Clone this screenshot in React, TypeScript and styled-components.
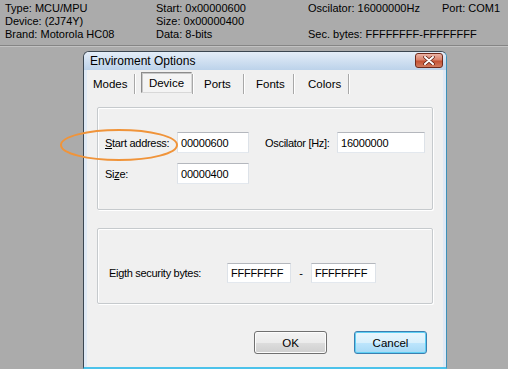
import React from "react";
import styled, { createGlobalStyle } from "styled-components";

const Global = createGlobalStyle`
  html, body { margin: 0; padding: 0; }
  body {
    background: #ababab;
    font-family: "Liberation Sans", Arial, sans-serif;
    font-size: 11px;
    color: #000;
    width: 508px;
    height: 369px;
    overflow: hidden;
  }
`;

const Page = styled.div`
  position: relative;
  width: 508px;
  height: 369px;
  overflow: hidden;
`;

const InfoBar = styled.div`
  display: grid;
  grid-template-columns: 151px 152px 134px 1fr;
  grid-auto-rows: 13px;
  padding: 2px 0 0 5px;
  height: 43px;
  line-height: 13px;
  border-bottom: 1px solid #858585;
  box-shadow: 0 1px 0 #c2c2c2;
  white-space: nowrap;
`;

const Dialog = styled.div`
  margin: 5px 0 0 83px;
  width: 364px;
  height: 318px;
  box-sizing: border-box;
  border: 1px solid #3b4650;
  border-right-color: #3d90b8;
  border-bottom: 2px solid #4cc2ea;
  border-radius: 6px 6px 0 0;
  background: #dfe9f5;
  padding: 0 3px;
  display: flex;
  flex-direction: column;
`;

const TitleBar = styled.div`
  height: 17px;
  margin: 0 -3px;
  padding: 1px 3px 0 6px;
  border-radius: 5px 5px 0 0;
  background: linear-gradient(#e4edf8, #bcd2ea);
  display: flex;
  justify-content: space-between;
  align-items: flex-start;
`;

const TitleText = styled.span`
  font-size: 12px;
  line-height: 16px;
  color: #000;
`;

const CloseButton = styled.div`
  width: 28px;
  height: 15px;
  box-sizing: border-box;
  border: 1px solid #6e2a1c;
  border-radius: 3px;
  background: linear-gradient(#eab2a4 0%, #d9826c 45%, #c45132 55%, #d27c60 100%);
  display: flex;
  align-items: center;
  justify-content: center;
`;

const Client = styled.div`
  flex: 1;
  background: #f0f0f0;
  display: flex;
  flex-direction: column;
`;

const TabStrip = styled.div`
  display: flex;
  align-items: center;
  padding-top: 3px;
  height: 21px;
`;

const Tab = styled.div<{ $w: number; $pad: number }>`
  width: ${(p) => p.$w}px;
  height: 20px;
  box-sizing: border-box;
  padding-left: ${(p) => p.$pad}px;
  line-height: 18px;
  font-size: 11.5px;
  border-right: 1px solid #a8a8a8;
  box-shadow: 1px 0 0 #ffffff;
  display: flex;
  align-items: center;
  margin-right: 1px;
`;

const ActiveTab = styled.div`
  width: 51px;
  height: 21px;
  box-sizing: border-box;
  margin: -2px 0 0 5px;
  border: 1px solid #8c8c8c;
  border-right-color: #d8d8d8;
  border-bottom-color: #d8d8d8;
  box-shadow: inset 1px 1px 0 #c8c8c8;
  background: #f4f4f4;
  display: flex;
  align-items: center;
  justify-content: center;
  font-size: 11.5px;
`;

const GroupBox = styled.div<{ $top: number; $h: number }>`
  margin: ${(p) => p.$top}px 10px 0 10px;
  height: ${(p) => p.$h}px;
  box-sizing: border-box;
  border: 1px solid #c6cacd;
  border-radius: 2px;
  box-shadow: inset 1px 1px 0 #ffffff, 1px 1px 0 #ffffff;
`;

const DeviceGrid = styled.div`
  display: grid;
  grid-template-columns: 72px 72px 16px 72px 88px;
  grid-auto-rows: 21px;
  row-gap: 10px;
  padding: 24px 0 0 7px;
  align-items: center;
`;

const SecurityGrid = styled.div`
  display: grid;
  grid-template-columns: 118px 64px 20px 65px;
  grid-auto-rows: 20px;
  padding: 34px 0 0 11px;
  align-items: center;
`;

const Label = styled.span`
  white-space: nowrap;
  letter-spacing: -0.3px;
`;

const Dash = styled.span`
  text-align: center;
`;

const Field = styled.div`
  height: 100%;
  box-sizing: border-box;
  background: #ffffff;
  border: 1px solid;
  border-color: #b4b7bd #dde2e8 #e3e8ee #dde2e8;
  padding: 0 3px;
  display: flex;
  align-items: center;
  letter-spacing: -0.2px;
`;

const ButtonRow = styled.div`
  display: flex;
  justify-content: flex-end;
  gap: 27px;
  padding: 27px 16px 0 0;
`;

const Button = styled.div<{ $default?: boolean }>`
  width: 73px;
  height: 23px;
  box-sizing: border-box;
  border-radius: 3px;
  border: 1px solid ${(p) => (p.$default ? "#3c7fb1" : "#707070")};
  background: ${(p) =>
    p.$default
      ? "linear-gradient(#eaf6fd 0%, #d9f0fc 50%, #bee6fd 50%, #a7d9f5 100%)"
      : "linear-gradient(#f3f3f3 0%, #ebebeb 50%, #dddddd 50%, #cfcfcf 100%)"};
  box-shadow: ${(p) =>
    p.$default ? "inset 0 0 0 1px #5fd0f4" : "inset 0 0 0 1px #fcfcfc"};
  display: flex;
  align-items: center;
  justify-content: center;
  font-size: 11.5px;
`;

const Highlight = styled.svg`
  position: absolute;
  left: 59px;
  top: 128px;
  pointer-events: none;
`;

export default function App() {
  return (
    <Page>
      <Global />
      <InfoBar>
        <span>Type: MCU/MPU</span>
        <span>Start: 0x00000600</span>
        <span>Oscilator: 16000000Hz</span>
        <span>Port: COM1</span>
        <span>Device: (2J74Y)</span>
        <span>Size: 0x00000400</span>
        <span></span>
        <span></span>
        <span>Brand: Motorola HC08</span>
        <span>Data: 8-bits</span>
        <span>Sec. bytes: FFFFFFFF-FFFFFFFF</span>
        <span></span>
      </InfoBar>
      <Dialog>
        <TitleBar>
          <TitleText>Enviroment Options</TitleText>
          <CloseButton>
            <svg width="12" height="9" viewBox="0 0 12 9">
              <path
                d="M2 1 L10 8 M10 1 L2 8"
                stroke="#5a1a10"
                strokeWidth="3.4"
                strokeLinecap="round"
              />
              <path
                d="M2 1 L10 8 M10 1 L2 8"
                stroke="#ffffff"
                strokeWidth="2"
                strokeLinecap="round"
              />
            </svg>
          </CloseButton>
        </TitleBar>
        <Client>
          <TabStrip>
            <Tab $w={48} $pad={6}>Modes</Tab>
            <ActiveTab>Device</ActiveTab>
            <Tab $w={1} $pad={0} />
            <Tab $w={50} $pad={10}>Ports</Tab>
            <Tab $w={49} $pad={11}>Fonts</Tab>
            <Tab $w={54} $pad={13}>Colors</Tab>
          </TabStrip>
          <GroupBox $top={13} $h={103}>
            <DeviceGrid>
              <Label>
                <u>S</u>tart address:
              </Label>
              <Field>00000600</Field>
              <span />
              <Label>Oscilator [Hz]:</Label>
              <Field>16000000</Field>
              <Label>
                Si<u>z</u>e:
              </Label>
              <Field>00000400</Field>
            </DeviceGrid>
          </GroupBox>
          <GroupBox $top={18} $h={76}>
            <SecurityGrid>
              <Label>Eigth security bytes:</Label>
              <Field>FFFFFFFF</Field>
              <Dash>-</Dash>
              <Field>FFFFFFFF</Field>
            </SecurityGrid>
          </GroupBox>
          <ButtonRow>
            <Button>OK</Button>
            <Button $default>Cancel</Button>
          </ButtonRow>
        </Client>
      </Dialog>
      <Highlight width="122" height="36" viewBox="0 0 122 36">
        <ellipse
          cx="60"
          cy="17"
          rx="58"
          ry="15"
          fill="none"
          stroke="#f0943a"
          strokeWidth="2"
        />
      </Highlight>
    </Page>
  );
}
